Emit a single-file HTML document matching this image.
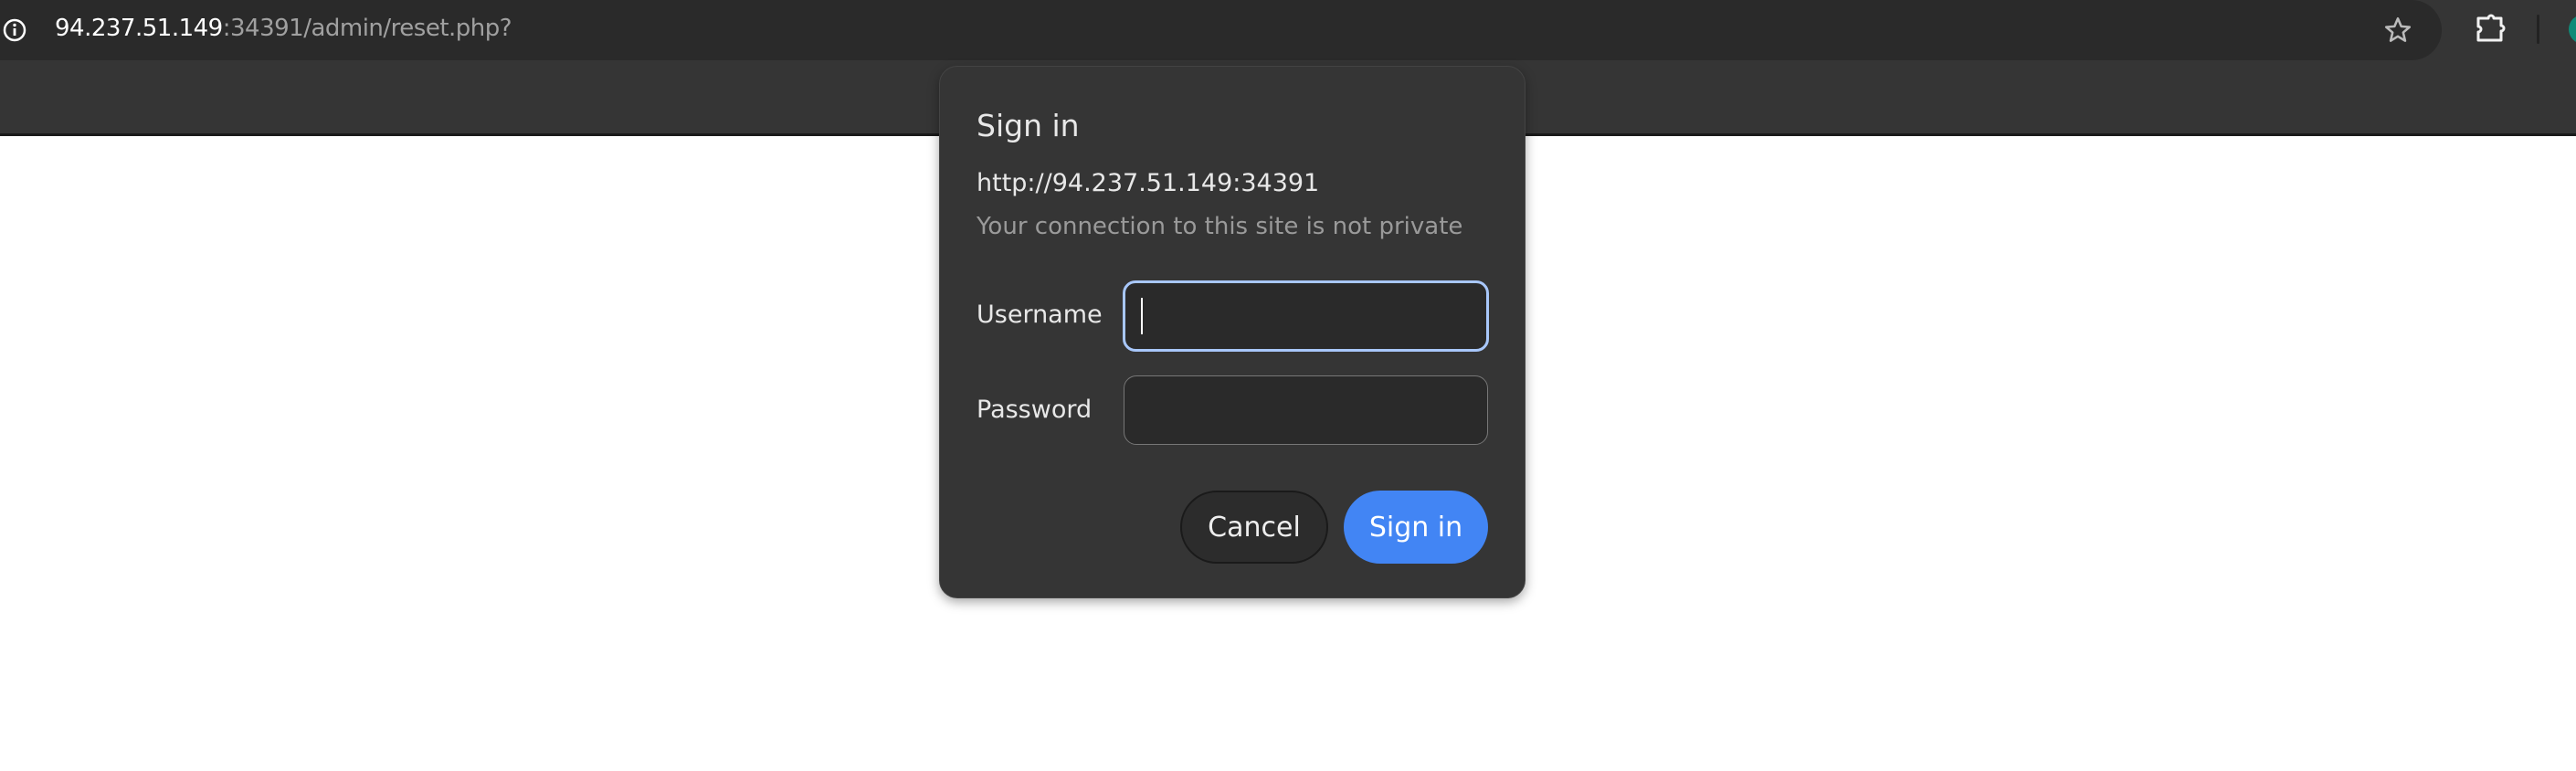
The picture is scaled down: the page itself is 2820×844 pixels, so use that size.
<!DOCTYPE html>
<html><head><style>
*{margin:0;padding:0;box-sizing:border-box}
body{width:2820px;height:844px;background:#fff;position:relative;overflow:hidden;font-family:"DejaVu Sans","Liberation Sans",sans-serif}
.top{position:absolute;left:0;top:0;width:2820px;height:149px;background:#353535;border-bottom:3px solid #1a1a1a}
.omni{position:absolute;left:-20px;top:0;width:2693px;height:66px;background:#2a2a2a;border-radius:0 33px 33px 0}
.url{position:absolute;left:60px;top:16px;font-size:26px;color:#fff;letter-spacing:-0.5px}
.url span{color:#a0a0a0}
.dlg{position:absolute;left:1028px;top:72px;width:642px;height:583px;background:#353535;border-radius:20px;box-shadow:0 4px 12px rgba(0,0,0,.35);border:1px solid #444}
.t{position:absolute;color:#e8e8e8;white-space:nowrap}
.inp{position:absolute;background:#2a2a2a;border-radius:14px}
.btn{position:absolute;height:80px;border-radius:40px;font-size:30px;display:flex;align-items:center;justify-content:center}
</style></head><body>
<div class="top">
 <div class="omni"></div>
 <svg style="position:absolute;left:2px;top:19px" width="28" height="28" viewBox="0 0 28 28"><circle cx="14" cy="14" r="11" fill="none" stroke="#fff" stroke-width="2.5"/><rect x="12.6" y="12" width="2.8" height="8" fill="#fff"/><circle cx="14" cy="8.5" r="1.7" fill="#fff"/></svg>
 <div class="url">94.237.51.149<span>:34391/admin/reset.php?</span></div>
 <svg style="position:absolute;left:2608px;top:16px" width="34" height="34" viewBox="0 0 24 24"><path d="M12 3l2.6 6.1 6.4.5-4.9 4.2 1.5 6.4L12 16.8 6.4 20.2l1.5-6.4L3 9.6l6.4-.5z" fill="none" stroke="#bbb" stroke-width="1.8" stroke-linejoin="round"/></svg>
 <svg style="position:absolute;left:2709px;top:12px" width="40" height="36" viewBox="0 0 40 36"><path d="M4 8h11a3 3 0 0 1 6 0h8v8a3 3 0 0 1 0 6v10H4v-9a3 3 0 0 0 0-6z" fill="none" stroke="#f2f2f2" stroke-width="3" stroke-linejoin="round"/></svg>
 <div style="position:absolute;left:2777px;top:16px;width:3px;height:32px;background:#222;border-radius:2px"></div>
 <div style="position:absolute;left:2812px;top:16px;width:32px;height:32px;background:#0f8a78;border-radius:50%"></div>
</div>
<div class="dlg">
 <div class="t" style="left:40px;top:45px;font-size:33px">Sign in</div>
 <div class="t" style="left:40px;top:112px;font-size:27px">http://94.237.51.149:34391</div>
 <div class="t" style="left:40px;top:160px;font-size:26px;color:#9a9a9a">Your connection to this site is not private</div>
 <div class="t" style="left:40px;top:256px;font-size:27px">Username</div>
 <div class="inp" style="left:200px;top:234px;width:401px;height:78px;border:3px solid #a8c7fa"></div>
 <div style="position:absolute;left:220px;top:253px;width:2px;height:40px;background:#fff"></div>
 <div class="t" style="left:40px;top:360px;font-size:27px">Password</div>
 <div class="inp" style="left:201px;top:338px;width:399px;height:76px;border:1px solid #777"></div>
 <div class="btn" style="left:263px;top:464px;width:162px;background:#2c2c2c;border:2px solid #1a1a1a;color:#eee">Cancel</div>
 <div class="btn" style="left:442px;top:464px;width:158px;background:#4285f4;color:#fff">Sign in</div>
</div>
</body></html>
